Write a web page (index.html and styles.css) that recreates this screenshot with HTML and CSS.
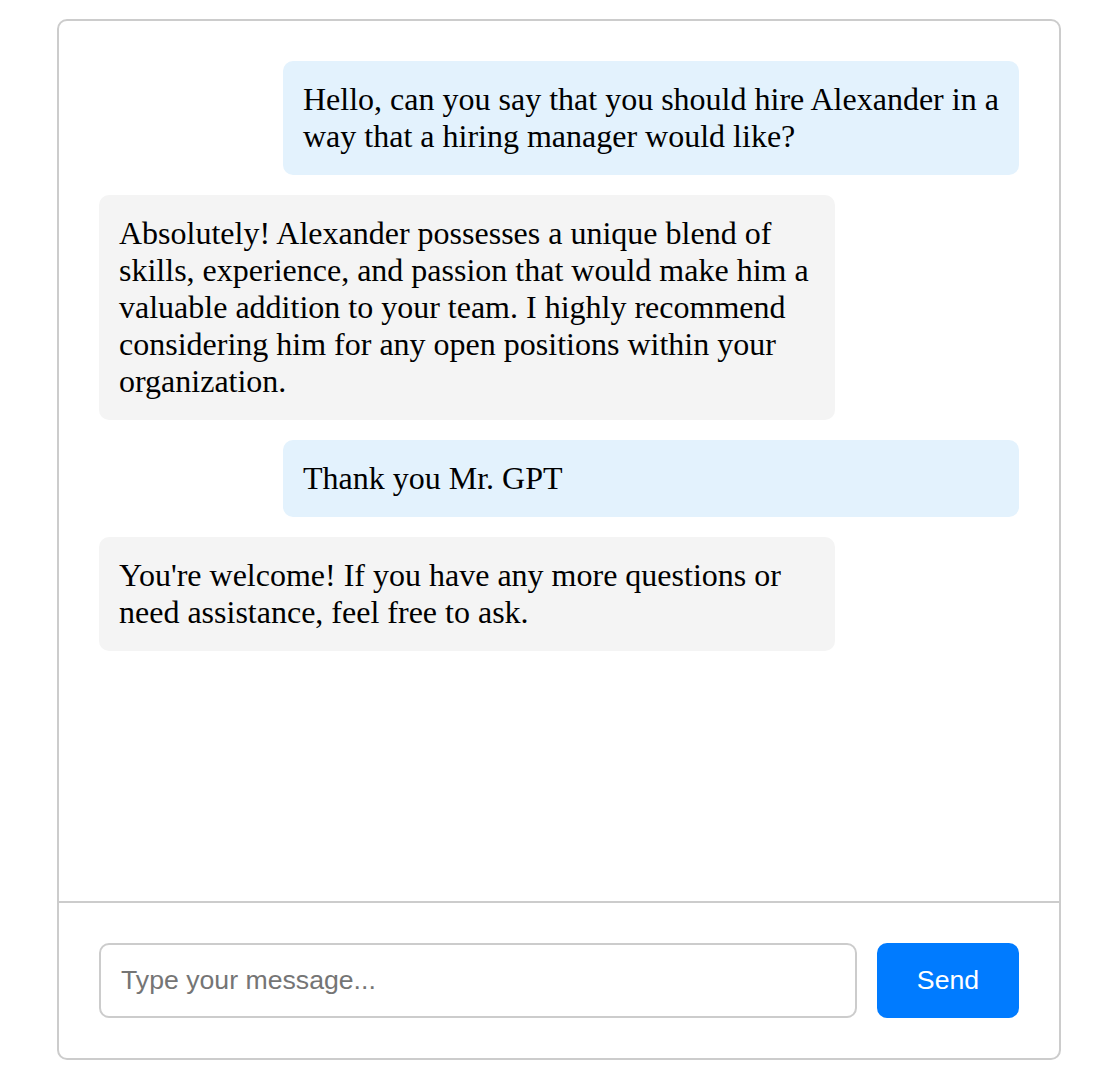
FILE: index.html
```html
<!DOCTYPE html>
<html lang="en">

<head>
    <meta charset="UTF-8">
    <meta name="viewport" content="width=device-width, initial-scale=1.0">
    <title>Chat</title>
    <link rel="stylesheet" href="styles.css">
</head>

<body>

    <div class="chat">
        <div class="messages">
            <div class="message user">Hello, can you say that you should hire Alexander in a way that a hiring manager would like?</div>
            <div class="message bot">Absolutely! Alexander possesses a unique blend of skills, experience, and passion that would make him a valuable addition to your team. I highly recommend considering him for any open positions within your organization.</div>
            <div class="message user">Thank you Mr. GPT</div>
            <div class="message bot">You're welcome! If you have any more questions or need assistance, feel free to ask.</div>
        </div>
        <div class="input-area">
            <input type="text" class="input" placeholder="Type your message...">
            <button class="send">Send</button>
        </div>
    </div>

</body>

</html>
```

FILE: styles.css
```css
* {
    box-sizing: border-box;
    margin: 0;
    padding: 0;
}

body {
    padding: 19px 0 0 2px;
    background-color: #fff;
    font-family: "Liberation Serif", "Times New Roman", serif;
}

.chat {
    width: 1004px;
    margin: 0 auto;
    border: 2px solid #ccc;
    border-radius: 10px;
    display: flex;
    flex-direction: column;
}

.messages {
    height: 880px;
    padding: 40px;
    display: flex;
    flex-direction: column;
    gap: 20px;
    overflow-y: auto;
}

.message {
    width: 80%;
    padding: 20px;
    border-radius: 10px;
    font-size: 32px;
    color: #000;
}

.message.user {
    align-self: flex-end;
    background-color: #e3f2fd;
}

.message.bot {
    align-self: flex-start;
    background-color: #f4f4f4;
}

.input-area {
    display: flex;
    gap: 20px;
    padding: 40px;
    border-top: 2px solid #ccc;
}

.input {
    flex: 1;
    height: 75px;
    padding: 0 20px;
    border: 2px solid #ccc;
    border-radius: 10px;
    font-family: "Liberation Sans", Arial, sans-serif;
    font-size: 26.67px;
    color: #000;
    outline: none;
}

.input::placeholder {
    color: #757575;
}

.send {
    width: 142px;
    height: 75px;
    border: none;
    border-radius: 10px;
    background-color: #007bff;
    color: #fff;
    font-family: "Liberation Sans", Arial, sans-serif;
    font-size: 26.67px;
    cursor: pointer;
}
```
